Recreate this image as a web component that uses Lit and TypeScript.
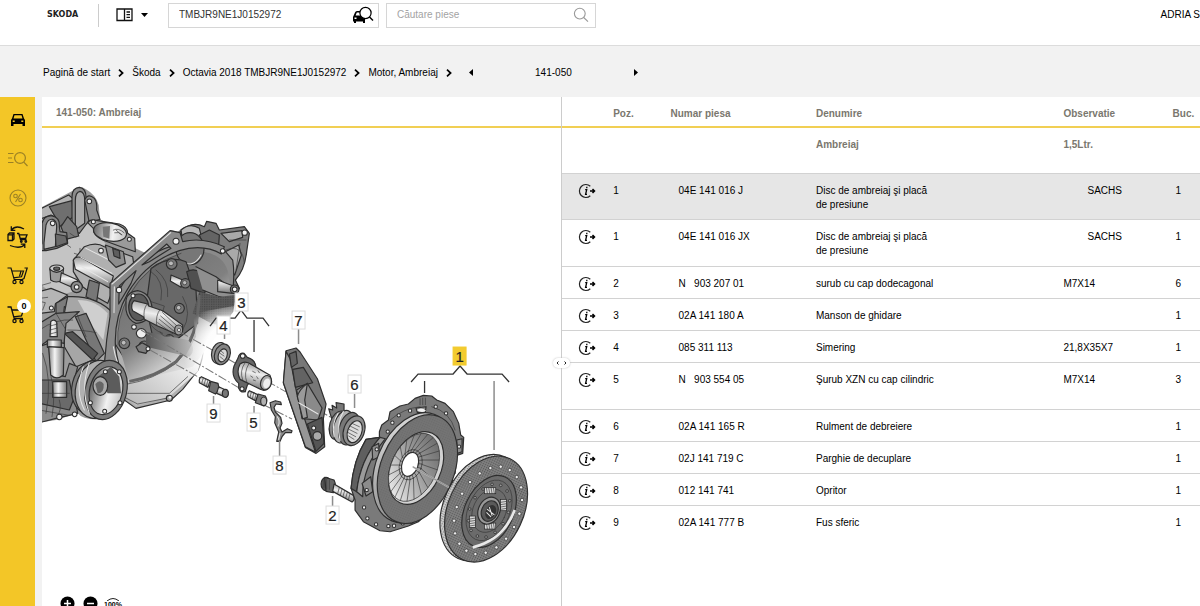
import { LitElement, html, svg, css, nothing } from "lit";
import { customElement } from "lit/decorators.js";
import { classMap } from "lit/directives/class-map.js";

/** Point on an ellipse with radii rx, ry, tilted by rot degrees. */
const onEllipse = (cx: number, cy: number, rx: number, ry: number, rot: number, deg: number) => {
  const t = (deg * Math.PI) / 180;
  const r = (rot * Math.PI) / 180;
  const x = rx * Math.cos(t);
  const y = ry * Math.sin(t);
  return {
    x: Math.round(cx + x * Math.cos(r) - y * Math.sin(r)),
    y: Math.round(cy + x * Math.sin(r) + y * Math.cos(r)),
  };
};

const steps = (n: number) => Array.from({ length: n }, (_, i) => (i * 360) / n);

interface Part {
  pos: string;
  num: string;
  name: string;
  note?: string;
  brand?: boolean;
  qty: string;
  tall?: boolean;
  selected?: boolean;
}

const PARTS: Part[] = [
  { pos: "1", num: "04E 141 016 J", name: "Disc de ambreiaj şi placă de presiune", note: "SACHS", brand: true, qty: "1", selected: true },
  { pos: "1", num: "04E 141 016 JX", name: "Disc de ambreiaj şi placă de presiune", note: "SACHS", brand: true, qty: "1", tall: true },
  { pos: "2", num: "N   903 207 01", name: "surub cu cap dodecagonal", note: "M7X14", qty: "6" },
  { pos: "3", num: "02A 141 180 A", name: "Manson de ghidare", qty: "1" },
  { pos: "4", num: "085 311 113", name: "Simering", note: "21,8X35X7", qty: "1" },
  { pos: "5", num: "N   903 554 05", name: "Şurub XZN cu cap cilindric", note: "M7X14", qty: "3", tall: true },
  { pos: "6", num: "02A 141 165 R", name: "Rulment de debreiere", qty: "1" },
  { pos: "7", num: "02J 141 719 C", name: "Parghie de decuplare", qty: "1" },
  { pos: "8", num: "012 141 741", name: "Opritor", qty: "1" },
  { pos: "9", num: "02A 141 777 B", name: "Fus sferic", qty: "1" },
];

const magnifier = html`<svg class="ico" width="16" height="16" viewBox="0 0 16 16" fill="none" stroke="currentColor" stroke-width="1.1"><circle cx="6.8" cy="6.6" r="5.4" /><path d="M10.7 10.5 15 14.6" /></svg>`;
const chevron = html`<svg class="chev" width="6" height="8" viewBox="0 0 6 8" fill="none" stroke="#000" stroke-width="1.7"><path d="M1 .7 4.6 4 1 7.3" /></svg>`;
const cart = svg`<path d="M.5 2h3.500l3.200 11.500H16M4.800 5h11.700l-2 5.800-8.300 1" /><circle cx="7.500" cy="16" r="1.600" /><circle cx="14.500" cy="16" r="1.600" />`;

@customElement("parts-drawing")
export class PartsDrawing extends LitElement {
  static styles = css`
    :host { display: block; }
    svg { display: block; width: 100%; height: auto; }
    .o { stroke: #2e2e2e; stroke-width: 3.5; stroke-linejoin: round; stroke-linecap: round; }
    .n { stroke: #3a3a3a; stroke-width: 2; fill: none; stroke-linecap: round; }
    .hi { stroke: #e6e6e6; stroke-width: 3; fill: none; stroke-linecap: round; }
    .dash { stroke: #777; stroke-width: 1; fill: none; stroke-dasharray: 9 2 2 2; }
    .lead { stroke: #333; stroke-width: 1.3; fill: none; }
    .soft { stroke: #8d8d8d; stroke-width: 1.5; fill: none; }
    .box { fill: #fff; stroke: #dcdcdc; stroke-width: 1; }
    .on { fill: #f3cb2f; stroke: #f3cb2f; }
    .num { font: 15px "Liberation Sans", Arial, sans-serif; fill: #222; stroke: #222; stroke-width: 0.2; text-anchor: middle; }
  `;

  private bolt(x: number, y: number, r = 12) {
    return svg`<circle class="o" cx=${x} cy=${y} r=${r} fill="#777" /><circle cx=${x - 2} cy=${y - 2} r=${r * 0.45} fill="#bbb" stroke="#333" stroke-width="2" />`;
  }

  private hole(x: number, y: number, r = 6) {
    return svg`<circle cx=${x} cy=${y} r=${r} fill="#f4f4f4" stroke="#2e2e2e" stroke-width="3" />`;
  }

  private label(n: string, x: number, y: number, on = false) {
    return svg`<rect class=${on ? "box on" : "box"} x=${x - 6.5} y=${y - 9} width="13" height="18" /><text class="num" x=${x} y=${y + 5.5}>${n}</text>`;
  }

  private gearbox() {
    return svg`<g transform="translate(36 180) scale(.3333)">
      <path fill="#9b9b9b" d="M10 85 110 32Q128 10 150 28 180 45 188 75L192 118 290 172 298 205 330 220 405 150 425 155Q465 122 505 140L512 125 540 130 550 150 625 140 638 155 632 215Q625 265 600 300L608 335 590 350Q585 400 540 450L470 560 400 660 300 685 265 655Q250 700 190 718 140 720 125 700L60 720 10 728Z" />
      <path fill="#c4c4c4" d="M10 205 50 205 75 180 130 140 165 130 215 200 130 230 110 250 125 330 60 350 10 310Z" />
      <path class="o" fill="#b4b4b4" d="M10 88 98 45 110 55 110 95 60 112 45 105 10 118Z" />
      <path class="o" fill="#6f6f6f" d="M40 80 108 62 112 110 70 140 62 118Z" />
      <path class="o" fill="#8b8b8b" d="M108 150V50Q108 24 130 22 150 24 150 52L160 120 130 160Z" />
      <path class="o" fill="#aaa" d="M118 150V62Q118 36 132 34 146 36 146 60V130Z" />
      <path class="o" fill="#8c8c8c" d="M146 60Q156 38 175 55 184 66 182 90L192 118 160 128Z" />
      <path class="o" fill="#7a7a7a" d="M75 140 95 110 122 140 128 168 90 178Z" />
      ${this.hole(160, 64, 7)}
      <path class="o" fill="#868686" d="M18 190V130Q24 105 48 108 72 112 70 140L72 155 92 158 95 190 62 205 30 212 10 212Z" />
      <path class="o" fill="#b9b9b9" d="M24 188 30 135Q36 116 50 118 62 122 62 140L58 200 24 208Z" />
      <path class="o" fill="#6a6a6a" d="M58 162 90 168 94 188 60 200Z" />
      ${this.hole(50, 130, 7)}
      <path class="n" d="M102 160 120 172M88 190 104 202M115 220l12 4M132 205v25" />

      <path class="o" fill="#9a9a9a" d="M155 128Q162 115 185 122L250 132Q275 140 275 160L296 175 298 215 255 200 200 180Q170 165 172 145Z" />
      <ellipse cx="222" cy="156" rx="50" ry="27" fill="url(#bore)" class="o" transform="rotate(10 222 156)" />
      <path d="M200 140 222 138 220 176 202 170Z" fill="#777" />
      <path class="n" d="M232 150q15-8 32 8M236 158q12-4 22 6M240 150l16 14" />
      ${this.hole(172, 125, 6)}${this.hole(280, 178, 6)}

      <path class="o" fill="#b0b0b0" d="M112 240 145 200Q180 185 205 200L290 230 300 300 230 330 215 370 180 350 140 320 112 275Z" />
      <path class="o" fill="url(#cylV)" d="M112 240Q120 225 140 235L232 288 222 325 118 268Z" />
      <path class="hi" d="M135 232 228 280M150 205 230 245M128 255 215 305" />
      <path class="o" fill="#8d8d8d" d="M208 195 262 215 268 250 240 262 218 240Z" />
      <path class="o" fill="#5e5e5e" d="M230 205 250 212 252 235 234 228Z" />
      ${this.hole(195, 212, 7)}
      <path class="o" fill="#777" d="M160 300 190 310 182 365 150 350Z" />
      <ellipse class="o" cx="62" cy="266" rx="21" ry="11" fill="#ccc" /><ellipse class="o" cx="62" cy="266" rx="9" ry="5" fill="#666" />
      <path class="o" fill="#9a9a9a" d="M42 268 44 300Q60 312 80 300L82 268Q62 286 42 268Z" />
      <path class="o" fill="url(#cylV)" d="M76 278 125 300 118 326 72 306Z" />
      <circle class="o" cx="122" cy="321" r="17" fill="#8d8d8d" />${this.hole(122, 321, 7)}
      <path class="o" fill="#b5b5b5" d="M10 335 45 325 95 345 58 372 55 395 10 400Z" />
      <path class="o" fill="#7c7c7c" d="M60 370 95 350 118 352 120 390 85 380 82 410 60 400Z" />
      ${this.hole(46, 384, 6)}${this.hole(110, 368, 6)}
      <path class="n" d="M10 318 44 308M10 355 35 352M15 365 28 368 20 390" />

      <path class="o" fill="#a6a6a6" d="M95 350Q180 345 232 400L212 500 205 555 170 540 120 560 85 500 85 400Z" />
      <path fill="#cfcfcf" d="M125 360Q180 360 215 400L202 480 170 440Z" />
      <path class="o" fill="#777" d="M118 410 150 400 205 520 180 545Z" />
      <path class="o" fill="#555" d="M85 460 110 455 185 520 170 540Z" />
      <path class="o" fill="#828282" d="M10 430 60 400 130 395 90 430 84 490 38 480 10 500Z" />
      <path class="n" d="M10 450Q60 415 110 420M60 400 90 450M120 395 150 470M95 450Q150 450 180 458" />
      <path class="o" fill="#8c8c8c" d="M10 500 38 490 45 580 88 590 100 550 125 560 110 620 125 700 60 715 10 728Z" />
      <path class="o" fill="#6a6a6a" d="M10 600 100 600 112 660 100 690 10 670Z" />
      <path class="o" fill="url(#cylH)" d="M50 605H92V652H50Z" />
      <path class="n" d="M20 520Q50 600 30 700M45 590Q60 640 48 710M70 660Q80 690 60 716M10 640H100M10 690 100 706" />
      <path class="o" fill="url(#cylH)" d="M44 425Q54 415 62 426L64 470H42ZM34 480H76V502H34Z" />
      <path class="n" d="M42 438 64 432M42 450 64 444M42 462 64 456" />
      <path class="o" fill="url(#cylH)" d="M38 500 84 503 82 585Q62 602 44 585Z" />
      ${this.hole(70, 711, 8)}${this.hole(116, 703, 7)}

      <path class="o" fill="#b0b0b0" d="M205 555 232 480 480 450Q520 500 485 572L440 628 405 660 300 685 265 660Z" />
      <path fill="url(#plate)" d="M272 600Q380 560 455 470L500 520 485 575 400 650 300 678 262 640Z" />
      <path class="n" d="M275 640 400 640 455 590M262 650 305 672 390 655" />
      <circle class="o" cx="400" cy="655" r="9" fill="#aaa" /><circle cx="402" cy="652" r="4" fill="#eee" />

      <path class="o" fill="#7d7d7d" d="M430 158Q465 120 505 140L512 124 540 130 550 150 625 140 640 160 632 215Q626 270 598 300L610 325 590 348 565 330 545 250 490 205Z" />
      <path class="o" fill="#b7b7b7" d="M435 150Q462 126 490 145L500 185Q460 165 440 180Z" />
      <path class="o" fill="#646464" d="M490 165 520 150 550 165 548 195 500 190Z" />
      <path class="o" fill="#a9a9a9" d="M555 160 618 152 620 172 580 185ZM568 215 608 195 616 225 596 285 575 260Z" />
      <path class="n" d="M570 210Q620 190 625 250M580 180 630 180M612 190 600 270" />

      <path class="o" fill="#8a8a8a" d="M230 480Q215 400 250 330 310 215 440 190 510 180 560 205L590 240Q600 300 580 390L520 470 430 480 300 590Z" />
      <path fill="url(#bell)" d="M250 500Q240 390 300 310 380 215 500 215 575 225 580 300L590 390 540 470 470 560 280 605Z" />
      <ellipse cx="462" cy="206" rx="42" ry="48" class="o" fill="#777" /><path class="hi" d="M430 240Q470 270 495 225" />
      <path class="o" fill="#686868" d="M345 265Q400 225 450 245L480 330 485 430 420 480 350 470 330 380Z" />
      <path fill="#505050" class="o" d="M452 275Q475 262 500 280L512 300Q515 325 505 340L465 325Z" />
      <path class="o" fill="#8f8f8f" d="M480 260 540 290 605 340 590 360 550 350 500 330" />
      <path fill="#5b5b5b" d="M490 335 550 350 600 345 592 395Q560 445 525 430L470 400Z" />
      <path fill="url(#dots)" d="M490 335 550 350 600 345 592 395Q560 445 525 430L470 400Z" />
      <path class="o" fill="url(#cylV)" d="M405 285 440 300 435 322 403 303ZM545 300 598 320 590 340 545 335Z" />
      ${this.bolt(448, 310, 14)}${this.bolt(407, 252, 16)}${this.bolt(430, 385, 15)}${this.bolt(400, 478, 14)}${this.bolt(265, 490, 16)}${this.bolt(325, 500, 17)}
      <path class="n" d="M345 275Q385 300 375 360M360 270Q400 300 395 350M440 350Q470 400 440 450" />
      <circle cx="596" cy="328" r="13" class="o" fill="#777" />${this.hole(596, 328, 7)}

      <path class="o" fill="#8a8a8a" fill-rule="evenodd" d="M222 410V310L402 152 432 158 440 185Q500 170 565 200L556 222Q500 190 430 212 330 245 275 340 235 410 238 495 245 560 270 610L255 640 205 555 212 480ZM250 318 300 272 285 310 248 372ZM318 255 392 192 405 205 340 245Z" />
      <path class="hi" d="M228 312 404 158M234 398 235 320M270 605Q240 550 232 500" />
      <path class="n" d="M246 495Q240 415 280 345 335 250 435 220M490 340Q490 480 420 550 350 600 275 612" stroke-width="4" />
      <path d="M489 345Q490 470 420 545 360 590 280 604" fill="none" stroke="#666" stroke-width="9" />
      ${this.hole(249, 330, 8)}${this.hole(420, 184, 9)}${this.hole(560, 213, 7)}${this.hole(626, 158, 8)}

      <path class="o" fill="#888" d="M270 360Q275 335 305 332 345 340 348 385 345 425 300 430 275 420 270 390Z" />
      <ellipse class="o" cx="308" cy="382" rx="30" ry="40" fill="#5b5b5b" />${this.hole(291, 347, 6)}
      <path class="o" fill="url(#cylS)" d="M294 362 335 372 338 378 380 392 440 435Q442 455 425 464L365 438 325 418 322 410 290 392Q282 375 294 362Z" />
      <path class="n" d="M333 372Q320 390 325 416M372 388Q358 408 362 434M380 398 425 440M374 408 420 448M370 418 416 455M365 428 410 461" />
      <ellipse class="o" cx="428" cy="450" rx="12" ry="15" fill="#999" /><circle cx="429" cy="450" r="5" fill="#ddd" stroke="#333" stroke-width="2" />
      <path fill="url(#shade)" d="M330 455 455 480Q485 505 460 530L330 500Z" />
      ${this.hole(294, 441, 7)}<ellipse cx="316" cy="460" rx="15" ry="14" fill="#eee" class="o" />
      <path class="o" fill="#7d7d7d" d="M300 500 318 488 340 500 330 520 308 515Z" />${this.hole(336, 506, 6)}
      <path class="n" d="M340 425Q350 450 380 460M345 365 385 378 380 395M372 455q8 20 30 12" />

      <ellipse class="o" cx="170" cy="622" rx="62" ry="82" fill="#7d7d7d" transform="rotate(14 170 622)" />
      <ellipse class="o" cx="185" cy="628" rx="66" ry="88" fill="#b0b0b0" transform="rotate(14 185 628)" />
      <ellipse class="o" cx="210" cy="630" rx="62" ry="90" fill="#7b7b7b" transform="rotate(14 210 630)" />
      <ellipse class="o" cx="210" cy="632" rx="49" ry="73" fill="url(#bore)" transform="rotate(14 210 632)" />
      <path fill="#5c5c5c" d="M185 590 225 560 250 590 255 640 215 640Z" />
      <ellipse class="o" cx="193" cy="618" rx="22" ry="28" fill="#aaa" /><path d="M178 612Q192 595 203 612 205 640 185 640Z" fill="#666" />
      <path class="hi" d="M142 560Q115 630 145 690M160 548Q132 625 160 700" />
      ${[[208, 575], [250, 575], [252, 668], [206, 694], [163, 668]].map(([x, y]) => this.hole(x, y, 6))}
      <path fill="url(#fade)" d="M470 400 640 370 660 520 470 620 430 560 480 470Z" />
    </g>`;
  }

  private smallParts() {
    return svg`<g transform="translate(190 280) scale(.3333)">
      <ellipse class="o" cx="87" cy="219" rx="22" ry="32" fill="#999" transform="rotate(14 87 219)" />
      <ellipse class="o" cx="97" cy="223" rx="23" ry="32" fill="#858585" transform="rotate(20 97 223)" />
      <ellipse class="o" cx="98" cy="226" rx="13" ry="20" fill="#d8d8d8" transform="rotate(20 98 226)" />
      <path class="n" d="M92 212l9 8M90 220l12 8M90 230l10 8" />
      <path class="o" fill="#666" d="M144 234Q148 216 162 220L172 232Q200 240 198 270L185 300 172 315 166 334Q152 340 146 325L146 310Q122 290 132 258Z" />
      ${this.hole(158, 228, 7)}${this.hole(156, 326, 6)}
      <path class="o" fill="url(#cylS)" d="M150 252Q165 240 185 254L240 286Q248 305 238 322 225 336 212 328L150 298Q138 275 150 252Z" />
      <path class="n" d="M164 250Q148 272 158 300M176 252Q160 278 170 306" />
      <ellipse class="o" cx="228" cy="308" rx="16" ry="22" fill="#aaa" transform="rotate(18 228 308)" /><ellipse cx="230" cy="310" rx="10" ry="15" fill="#eee" transform="rotate(18 230 310)" />
      <path class="n" d="M188 274l8 4M182 288l6 4M200 290l4 6M204 272l4 6M190 300l6 2" />

      <path class="o" fill="url(#cylS)" d="M34 290 60 302 54 322 28 308Q26 294 34 290Z" /><path class="n" d="M40 293l-5 17M47 297l-5 17M54 300l-5 18" />
      <path class="o" fill="#707070" d="M62 304 84 310 88 330 76 342 56 332Z" /><path class="o" fill="url(#cylS)" d="M86 320 112 332Q118 345 108 352L80 340Z" />
      <ellipse class="o" cx="106" cy="340" rx="9" ry="12" fill="#777" />
      <path class="o" fill="url(#cylS)" d="M178 332 204 344 200 364 174 350Q171 338 178 332Z" /><path class="n" d="M184 335l-4 17M191 339l-4 17M198 342l-4 18" />
      <path class="o" fill="#777" d="M204 342 226 348Q236 364 222 378L196 368Z" /><ellipse class="o" cx="221" cy="364" rx="9" ry="13" fill="#b0b0b0" />

      <path class="o" fill="#8b8b8b" d="M240 368 256 362 272 366 274 374 258 372 252 382 256 396 272 412 276 430 270 444 276 456 292 446 306 452 304 458 286 458 276 470 270 484 260 484 266 456 254 428 256 410 244 390Z" />
      <path class="hi" d="M262 410Q272 424 264 438M270 460 266 478" />

      <path class="o" fill="#777" d="M288 212 318 204 330 216 382 296 408 372 400 416 404 500 378 520 346 502 280 308Z" />
      <path class="o" fill="#969696" d="M288 214 300 236 322 350 376 516 346 500 280 308Z" />
      <path class="o" fill="#636363" d="M298 222 318 214 322 250 304 262ZM308 268 340 262 368 308 316 322Z" />
      <path class="o" fill="#8a8a8a" d="M320 330 352 310 396 384 384 420 336 416Z" /><path class="o" fill="#9a9a9a" d="M322 350Q326 330 352 310L344 360 352 412 338 416Z" />
      <path class="o" fill="#555" d="M352 432 396 412 402 490 378 514Z" /><circle class="o" cx="382" cy="468" r="13" fill="#aaa" />${this.hole(371, 444, 6)}
      <path class="hi" d="M326 368 384 402" />

      <path class="o" fill="#777" d="M420 400 416 386 428 390 426 376 440 384 438 368 462 372 462 396 430 430Z" />
      <ellipse class="o" cx="446" cy="436" rx="27" ry="44" fill="#858585" transform="rotate(16 446 436)" />
      <ellipse class="o" cx="460" cy="440" rx="29" ry="50" fill="#b2b2b2" transform="rotate(16 460 440)" />
      <ellipse class="o" cx="478" cy="446" rx="30" ry="50" fill="#777" transform="rotate(16 478 446)" />
      <ellipse class="o" cx="492" cy="452" rx="31" ry="46" fill="#8d8d8d" transform="rotate(20 492 452)" />
      <ellipse class="o" cx="494" cy="455" rx="21" ry="34" fill="#ddd" transform="rotate(20 494 455)" />
      <path class="n" d="M486 430l22 10M480 438l24 12M477 448l24 12M475 458l22 12M476 468l16 10" />
      <path class="hi" d="M444 400Q424 430 432 470M460 394Q438 430 450 482" />

      <ellipse class="o" cx="408" cy="612" rx="15" ry="20" fill="#555" /><path class="o" fill="#666" d="M404 592 432 600Q442 620 430 638L408 634Z" />
      <path class="n" d="M402 600v22M410 598v28M418 600v28" />
      <path class="o" fill="url(#cylS)" d="M432 612 490 646Q496 660 486 666L428 634Z" /><path class="n" d="M448 622l-5 18M456 627l-5 18M464 631l-5 18M472 636l-5 18M480 641l-5 18" />
    </g>`;
  }

  private clutch() {
    return svg`<g transform="translate(340 340) scale(.3333)">
      <path class="o" fill="#7a7a7a" d="M118 275 125 255 145 240 150 215 180 198 205 192 225 175 250 166 275 168 290 180 315 190 340 215 356 250 362 285 371 292 368 340 350 346 345 400 335 410 338 425 315 440 310 458 270 510 235 545 205 558 150 575 120 572 70 545 45 510 45 480 33 445Q40 360 78 298L118 292Z" />
      <path class="o" fill="#5f5f5f" d="M78 298 120 292Q60 360 50 455L33 445Q40 360 78 298Z" />
      <path class="o" fill="#9b9b9b" d="M120 292 136 296Q66 380 68 470L50 455Q60 360 120 292Z" />
      <path class="o" fill="#8c8c8c" d="M66 430 92 410 98 455 78 468ZM96 320 116 310 118 350 98 360ZM228 204 258 200 256 216 232 218ZM350 300 366 296 366 335 352 340Z" />
      <path class="n" d="M150 240Q190 205 240 200M275 200Q330 215 345 270M240 176v18M248 174v20M256 174v20" />
      ${[[143, 275], [157, 248], [176, 226], [210, 212], [287, 200], [318, 220], [110, 328], [80, 450], [72, 502], [108, 553], [145, 558], [188, 550], [215, 545], [357, 320], [82, 535], [162, 557]].map(([x, y]) => this.hole(x, y, 5))}
      <path d="M230 210Q244 200 258 212 244 220 230 210Z" fill="#f4f4f4" />
      <ellipse cx="220" cy="383" rx="112" ry="172" transform="rotate(22 220 383)" fill="url(#rim)" class="o" />
      <ellipse cx="232" cy="387" rx="110" ry="170" transform="rotate(22 232 387)" fill="#747474" class="o" />
      <ellipse cx="232" cy="387" rx="110" ry="170" transform="rotate(22 232 387)" fill="url(#dots)" opacity=".25" />
      <ellipse cx="228" cy="384" rx="74" ry="115" transform="rotate(25 228 384)" fill="#d2d2d2" class="o" />
      <ellipse cx="222" cy="382" rx="68" ry="108" transform="rotate(25 222 382)" fill="url(#bowl)" stroke="#333" stroke-width="2" />
      ${steps(22).map((d) => {
        const a = onEllipse(212, 374, 32, 45, 20, d);
        const b = onEllipse(222, 382, 67, 107, 25, d + 4);
        return svg`<path class="n" d="M${a.x} ${a.y}L${b.x} ${b.y}" />`;
      })}
      <ellipse cx="212" cy="374" rx="33" ry="47" transform="rotate(20 212 374)" fill="#b3b3b3" class="n" />
      ${steps(22).map((d) => {
        const a = onEllipse(210, 373, 25, 37, 20, d);
        const b = onEllipse(212, 374, 33, 47, 20, d);
        return svg`<path class="n" d="M${a.x} ${a.y}L${b.x} ${b.y}" />`;
      })}
      <ellipse cx="210" cy="373" rx="24" ry="37" transform="rotate(20 210 373)" fill="#fff" class="o" />
      <path d="M218 380 334 446" stroke="#bbb" stroke-width="5" /><path d="M218 380 334 446" stroke="#666" stroke-width="1.500" />

      <ellipse cx="425" cy="503" rx="114" ry="168" transform="rotate(25 425 503)" fill="#cfcfcf" class="o" />
      <ellipse cx="425" cy="503" rx="114" ry="168" transform="rotate(25 425 503)" fill="url(#dots)" />
      <ellipse cx="438" cy="507" rx="113" ry="167" transform="rotate(25 438 507)" fill="#808080" class="o" />
      <ellipse cx="438" cy="507" rx="113" ry="167" transform="rotate(25 438 507)" fill="url(#dots)" />
      <ellipse cx="447" cy="514" rx="73" ry="114" transform="rotate(25 447 514)" fill="#6b6b6b" class="o" />
      <path d="M398 622Q490 600 524 510" stroke="#e8e8e8" stroke-width="8" fill="none" />
      <ellipse cx="447" cy="511" rx="62" ry="96" transform="rotate(25 447 511)" fill="#6e6e6e" class="n" />
      <ellipse cx="448" cy="512" rx="49" ry="68" transform="rotate(25 448 512)" fill="#7a7a7a" class="n" />
      ${[[450, 452, 0], [397, 545, 90], [450, 558, 0], [490, 495, 90]].map(([x, y, r]) => svg`<g transform="translate(${x} ${y}) rotate(${r})"><rect x="-17" y="-9" width="34" height="18" fill="#d9d9d9" stroke="#222" stroke-width="2" /><path class="n" d="M-11-9l3 18M-4-9l3 18M3-9l3 18M10-9l3 18" stroke-width="3" /></g>`)}
      <ellipse cx="447" cy="512" rx="32" ry="42" transform="rotate(25 447 512)" fill="#999" class="o" />
      <ellipse cx="449" cy="513" rx="24" ry="32" transform="rotate(25 449 513)" fill="#5a5a5a" class="o" />
      <ellipse cx="452" cy="516" rx="15" ry="22" transform="rotate(25 452 516)" fill="#333" />
      <path class="hi" d="M442 508 462 524M448 502 456 526M440 518 452 530" />
      ${steps(20).map((d) => {
        const p = onEllipse(444, 511, 92, 138, 25, d + 5);
        return svg`<circle cx=${p.x} cy=${p.y} r="5" fill="#eee" stroke="#333" stroke-width="2" />`;
      })}
      ${steps(14).map((d) => {
        const p = onEllipse(447, 512, 56, 84, 25, d + 12);
        return svg`<circle cx=${p.x} cy=${p.y} r="4" fill="#999" stroke="#222" stroke-width="2" />`;
      })}
    </g>`;
  }

  render() {
    return html`<svg viewBox="42 128 519 478" role="img" aria-label="141-050: Ambreiaj">
      <defs>
        <pattern id="dots" width="7" height="7" patternUnits="userSpaceOnUse"><circle cx="2" cy="2" r="1.7" fill="#333" /></pattern>
        <linearGradient id="cylV" x2="0" y2="1"><stop offset="0" stop-color="#999" /><stop offset=".35" stop-color="#f2f2f2" /><stop offset="1" stop-color="#777" /></linearGradient>
        <linearGradient id="cylH"><stop offset="0" stop-color="#888" /><stop offset=".4" stop-color="#f5f5f5" /><stop offset="1" stop-color="#777" /></linearGradient>
        <linearGradient id="cylS" x1=".6" y1="0" x2=".35" y2="1"><stop offset="0" stop-color="#8c8c8c" /><stop offset=".4" stop-color="#eee" /><stop offset="1" stop-color="#666" /></linearGradient>
        <linearGradient id="bore"><stop offset="0" stop-color="#6a6a6a" /><stop offset=".3" stop-color="#aaa" /><stop offset=".6" stop-color="#f2f2f2" /><stop offset="1" stop-color="#c4c4c4" /></linearGradient>
        <linearGradient id="bell" x1=".1" y1="0" x2=".8" y2="1"><stop offset="0" stop-color="#6c6c6c" /><stop offset=".5" stop-color="#808080" /><stop offset=".75" stop-color="#cfcfcf" /><stop offset="1" stop-color="#fff" /></linearGradient>
        <linearGradient id="plate" x1="0" y1="1" x2="1" y2="0"><stop offset="0" stop-color="#b5b5b5" /><stop offset=".6" stop-color="#e6e6e6" /><stop offset="1" stop-color="#fff" /></linearGradient>
        <linearGradient id="shade"><stop offset="0" stop-color="#555" /><stop offset="1" stop-color="#bbb" /></linearGradient>
        <linearGradient id="rim" x1="0" y1="0" x2="1" y2="1"><stop offset="0" stop-color="#eee" /><stop offset=".3" stop-color="#bbb" /><stop offset="1" stop-color="#777" /></linearGradient>
        <linearGradient id="bowl" x1=".8" y1="0" x2=".3" y2="1"><stop offset="0" stop-color="#666" /><stop offset=".45" stop-color="#999" /><stop offset="1" stop-color="#ececec" /></linearGradient>
        <radialGradient id="fade" gradientUnits="userSpaceOnUse" cx="590" cy="510" r="150"><stop offset="0" stop-color="#fff" /><stop offset=".55" stop-color="#fff" stop-opacity=".95" /><stop offset="1" stop-color="#fff" stop-opacity="0" /></radialGradient>
      </defs>
      ${this.gearbox()}
      <path class="dash" d="M180 332 214 351M228 359 362 435M141 330 246 392M262 404 292 419M150 350 202 379" />
      ${this.smallParts()}${this.clutch()}
      <path class="lead" d="M210 326 216 318H235L241 310 247 318H263L269 326M411 382 418 374H453L460 366 467 374H502L509 382M254 320V352M424.500 381V393" />
      <path class="soft" d="M224.500 333V339M298.500 329V344M354.500 394V408M494 381V450M213.500 396V404M254 406V413M279.500 441V456M332.500 496V506" />
      ${this.label("3", 241.5, 302)}${this.label("4", 223.5, 325)}${this.label("7", 298.5, 320)}${this.label("1", 459.5, 356, true)}
      ${this.label("6", 354.5, 384)}${this.label("9", 213.5, 413)}${this.label("5", 253.5, 422)}${this.label("8", 279.5, 465)}${this.label("2", 332.5, 515)}
    </svg>`;
  }
}

@customElement("app-root")
export class AppRoot extends LitElement {
  static styles = css`
    :host { display: flex; flex-direction: column; height: 100vh; overflow: hidden; background: #fff; color: #000; font: 10px/14px "Liberation Sans", Arial, sans-serif; }
    * { box-sizing: border-box; }
    svg { display: block; }
    button { display: grid; place-items: center; margin: 0; padding: 0; border: 0; background: none; color: inherit; font: inherit; cursor: pointer; }
    a { color: inherit; text-decoration: none; }
    .top { display: flex; align-items: center; flex: none; height: 46px; padding: 3px 0 18px 47px; border-bottom: 1px solid #dcdcdc; }
    .logo { width: 33px; font: bold 8px/10px "DejaVu Sans", sans-serif; color: #222; }
    .bar { width: 1px; height: 23px; margin: 0 17px 0 18px; background: #ccc; }
    .book { grid-auto-flow: column; gap: 8px; width: 52px; justify-content: start; }
    .field { display: flex; align-items: center; flex: 0 1 211px; height: 25px; padding: 0 4px 0 10px; border: 1px solid #d6d6d6; }
    .field + .field { margin-left: 7px; flex-basis: 210px; padding-right: 6px; color: #999; }
    .field input { flex: 1; min-width: 0; padding: 0; border: 0; outline: 0; background: none; font: inherit; color: #333; }
    .field input::placeholder { color: #a3a3a3; opacity: 1; }
    .user { margin-left: auto; white-space: nowrap; }
    .crumbs { display: flex; align-items: center; flex: none; gap: 8px; height: 51px; padding: 2px 0 0 43px; background: #f2f2f2; white-space: nowrap; }
    .pager { display: flex; align-items: center; justify-content: space-between; width: 169px; margin-left: 9px; }
    .main { display: flex; flex: 1; min-height: 0; background: #f2f2f2; }
    .side { display: flex; flex-direction: column; flex: none; width: 35px; margin-right: 7px; padding-top: 3px; background: #f3c627; }
    .side button { position: relative; width: 35px; height: 39px; }
    .off { opacity: 0.42; }
    .badge { position: absolute; top: 4px; right: 4px; width: 14px; height: 14px; border-radius: 7px; background: #fff; font: bold 9px/14px "Liberation Sans", Arial, sans-serif; text-align: center; }
    .work { display: flex; flex: 1; min-width: 0; background: #fff; }
    .left { position: relative; flex: none; width: calc(45% - 1px); border-right: 1px solid #ccc; }
    .title { height: 31px; margin: 0; padding: 9px 14px 0; border-bottom: 2px solid #f1cf54; font: inherit; font-weight: bold; color: #7a776e; }
    .zoom { position: absolute; bottom: -5px; left: 18px; display: flex; align-items: center; gap: 8px; }
    .pct { font: bold 7px/8px "Liberation Sans", Arial, sans-serif; margin-left: -2px; }
    .split { position: absolute; top: 261px; right: -9px; display: flex; width: 17px; height: 10px; border-radius: 5px; background: #fff; box-shadow: 0 0 2px #bbb; align-items: center; justify-content: center; }
    .right { flex: 1; min-width: 0; overflow: hidden; }
    table { width: 100%; border-collapse: separate; border-spacing: 0; table-layout: fixed; }
    th, td { padding: 10px 0 0; text-align: left; vertical-align: top; border-bottom: 1px solid #d2d2d2; white-space: nowrap; }
    th { color: #7a776e; }
    thead th { height: 31px; border-bottom: 2px solid #f1cf54; }
    .group th { height: 46px; }
    td { height: 32px; }
    .sel td { height: 46px; background: #e6e6e6; }
    .tall td { height: 47px; }
    tr:last-child td { border-bottom: 0; }
    td.num { padding-left: 8px; white-space: pre; }
    td.name { white-space: normal; }
    .wrap { max-width: 124px; }
    td.brand { padding-left: 24px; }
    td.qty { padding-left: 3px; }
    td.info { padding: 9px 0 0 16px; }
    .c1 { width: 8%; } .c2 { width: 9%; } .c3 { width: 22.8%; } .c4 { width: 38.8%; } .c5 { width: 17.1%; }
  `;

  private row(p: Part) {
    return html`<tr class=${classMap({ tall: !!p.tall, sel: !!p.selected })}>
      <td class="info"><button aria-label="Info"><svg width="18" height="16" viewBox="0 0 18 16"><path d="M12.300 3.200A6.500 6.500 0 1 0 12.300 12.800" fill="none" stroke="#222" stroke-width="1.200" /><path d="M12 8h4.500M14.500 6l2 2-2 2" fill="none" stroke="#000" stroke-width="1.500" /><path d="M7.200 6.600h1.500L7.600 11.300h1.400M8.800 3.800v1.500" fill="none" stroke="#000" stroke-width="1.300" /></svg></button></td>
      <td>${p.pos}</td>
      <td class="num">${p.num}</td>
      <td class="name"><div class=${p.brand ? "wrap" : "full"}>${p.name}</div></td>
      <td class=${p.brand ? "brand" : "note"}>${p.note ?? nothing}</td>
      <td class="qty">${p.qty}</td>
    </tr>`;
  }

  render() {
    return html`
      <header class="top">
        <a class="logo" href="#">SKODA</a>
        <span class="bar"></span>
        <button class="book" aria-label="Catalog">
          <svg width="17" height="14" viewBox="0 0 17 14" fill="none" stroke="#111" stroke-width="1.300"><path d="M1 1h7.500v11.500H1zM8.500 1H16v11.500H8.500z" /><path d="M10.500 4H14M10.500 6.700H14M10.500 9.400H14" /></svg>
          <svg width="7" height="4" viewBox="0 0 7 4"><path d="M0 0h7L3.500 4z" /></svg>
        </button>
        <div class="field">
          <input aria-label="VIN" value="TMBJR9NE1J0152972" />
          <button aria-label="Cautare vehicul"><svg width="22" height="18" viewBox="0 0 22 18"><path d="M1 11 3 6.500Q3.500 5 5 5H9L13 12V17H11V15.500H4V17H2V15.500H1ZM4.800 6.500 3.600 9.500H8V6.500ZM2.500 11.500V13H4.500V11.500Z" fill-rule="evenodd" /><circle cx="13.500" cy="7" r="5.600" fill="#fff" stroke="#000" stroke-width="1.200" /><path d="M17.500 11 21 14.500" stroke="#000" stroke-width="1.400" /></svg></button>
        </div>
        <div class="field">
          <input aria-label="Căutare piese" placeholder="Căutare piese" />
          <button aria-label="Căutare">${magnifier}</button>
        </div>
        <span class="user">ADRIA S</span>
      </header>
      <nav class="crumbs">
        <a href="#">Pagină de start</a>${chevron}<a href="#">Škoda</a>${chevron}<a href="#">Octavia 2018 TMBJR9NE1J0152972</a>${chevron}<a href="#">Motor, Ambreiaj</a>${chevron}
        <div class="pager">
          <button aria-label="Inapoi"><svg width="4" height="7" viewBox="0 0 4 7"><path d="M4 0v7L0 3.500z" /></svg></button>
          <span>141-050</span>
          <button aria-label="Inainte"><svg width="4" height="7" viewBox="0 0 4 7"><path d="M0 0v7l4-3.500z" /></svg></button>
        </div>
      </nav>
      <div class="main">
        <aside class="side">
          <button aria-label="Vehicul"><svg width="14" height="12" viewBox="0 0 14 12"><path d="M2.500 0h9L13 4.500l1 1.500v6h-2.500v-2h-9v2H0V6l1-1.500ZM3.500 1.300 2.500 4.500h9l-1-3.200ZM1.700 6.500v1.500h2V6.500Zm8.600 0v1.500h2V6.500Z" fill-rule="evenodd" /></svg></button>
          <button class="off" aria-label="Căutare"><svg width="20" height="16" viewBox="0 0 20 16" fill="none" stroke="#222" stroke-width="1.200"><path d="M0 2.500h5.500M0 7h4M0 11.500h5.500M15.800 11.200 19.500 15" /><circle cx="12" cy="7" r="5.400" /></svg></button>
          <button class="off" aria-label="Reduceri"><svg width="18" height="18" viewBox="0 0 18 18" fill="none" stroke="#222" stroke-width="1.100"><circle cx="9" cy="9" r="8" /><circle cx="6.500" cy="7" r="1.800" /><circle cx="11.500" cy="11" r="1.800" /><path d="M11.500 5 6.500 13" /></svg></button>
          <button aria-label="Transfer"><svg width="22" height="24" viewBox="0 0 22 24" fill="none" stroke="#111" stroke-width="1.300"><path d="M1 9.500 2.500 8H7v6l-1.500 1.500H1ZM1 9.800h4.500v5.500M5.500 9.800 7 8" /><path d="M10 8.500h1.800l1.700 6h6M12.500 9.800h7.500l-1.300 3.500h-5.500" /><circle cx="14.300" cy="16.500" r=".8" /><circle cx="18.800" cy="16.500" r=".8" /><path d="M4.500 5Q9-.5 17 4M4.300 1.300v4h4M18 19.500Q13 24.500 3 20.500M17.800 23v-3.800h-4" /></svg></button>
          <button aria-label="Comandă"><svg width="21" height="19" viewBox="0 0 21 19" fill="none" stroke="#111" stroke-width="1.200">${cart}<path d="M17.500 2h2.700L17 12.500 15 13.500M14 5 12.500 10.500" /></svg></button>
          <button aria-label="Coș"><svg width="21" height="19" viewBox="0 0 21 19" fill="none" stroke="#111" stroke-width="1.300">${cart}</svg><span class="badge">0</span></button>
        </aside>
        <div class="work">
          <section class="left">
            <h1 class="title">141-050: Ambreiaj</h1>
            <parts-drawing></parts-drawing>
            <div class="zoom">
              <button aria-label="Mărire"><svg width="15" height="15" viewBox="0 0 15 15"><circle cx="7.500" cy="7.500" r="7" /><path d="M4 7.500h7M7.500 4v7" stroke="#fff" stroke-width="1.500" /></svg></button>
              <button aria-label="Micșorare"><svg width="15" height="15" viewBox="0 0 15 15"><circle cx="7.500" cy="7.500" r="7" /><path d="M4 7.500h7" stroke="#fff" stroke-width="1.500" /></svg></button>
              <button class="pct"><svg width="12" height="3" viewBox="0 0 12 3"><path d="M0 3Q6-2 12 3" fill="none" stroke="#222" /></svg><span>100%</span></button>
            </div>
            <button class="split" aria-label="Redimensionare"><svg width="11" height="4" viewBox="0 0 11 4" fill="none" stroke="#222"><path d="M2.500.5 1 2l1.500 1.500M8.500.5 10 2 8.500 3.500" /></svg></button>
          </section>
          <section class="right">
            <table>
              <colgroup><col class="c1" /><col class="c2" /><col class="c3" /><col class="c4" /><col class="c5" /><col /></colgroup>
              <thead><tr><th></th><th>Poz.</th><th>Numar piesa</th><th>Denumire</th><th>Observatie</th><th>Buc.</th></tr></thead>
              <tbody>
                <tr class="group"><th></th><th></th><th></th><th>Ambreiaj</th><th>1,5Ltr.</th><th></th></tr>
                ${PARTS.map((p) => this.row(p))}
              </tbody>
            </table>
          </section>
        </div>
      </div>
    `;
  }
}
